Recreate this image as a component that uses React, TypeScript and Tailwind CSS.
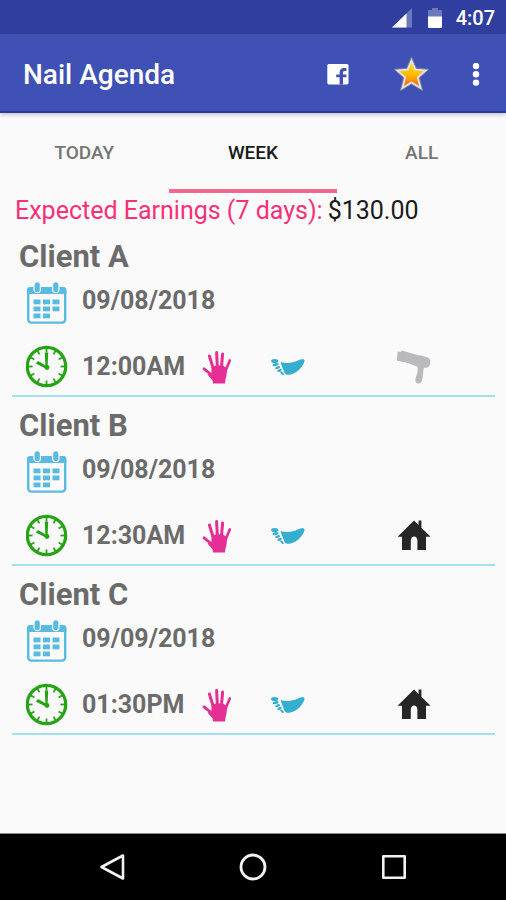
type Appointment = {
    client: string;
    date: string;
    time: string;
    place: 'salon' | 'home';
};

const appointments: Appointment[] = [
    { client: 'Client A', date: '09/08/2018', time: '12:00AM', place: 'salon' },
    { client: 'Client B', date: '09/08/2018', time: '12:30AM', place: 'home' },
    { client: 'Client C', date: '09/09/2018', time: '01:30PM', place: 'home' },
];

export default function App() {
    return (
        <div className="min-h-screen flex flex-col bg-[#fafafa] font-['Roboto',sans-serif]">
            <StatusBar />
            <header className="relative h-[79px] flex items-center bg-[#3f51b5] border-b-2 border-[#1f3da5] pl-[23px] pr-3 pt-1 text-white shadow-[0_2px_4px_rgba(0,0,0,0.2)]">
                <h1 className="flex-1 text-[28px] leading-8 font-medium">Nail Agenda</h1>
                <button type="button" aria-label="Facebook" className="w-9 h-12 mr-9 flex items-center justify-center">
                    <FacebookIcon />
                </button>
                <button type="button" aria-label="Rate" className="w-10 h-12 mr-[26px] flex items-center justify-center">
                    <StarIcon />
                </button>
                <button type="button" aria-label="More options" className="w-9 h-12 flex items-center justify-center">
                    <svg width="8" height="24" viewBox="0 0 8 24" fill="#fff">
                        <circle cx="4" cy="3" r="3.2" />
                        <circle cx="4" cy="11.3" r="3.2" />
                        <circle cx="4" cy="19.6" r="3.2" />
                    </svg>
                </button>
            </header>

            <div role="tablist" className="grid grid-cols-3 h-20">
                <Tab label="TODAY" />
                <Tab label="WEEK" selected />
                <Tab label="ALL" />
            </div>

            <main className="flex-1">
                <p className="pl-[15px] h-[35px] flex items-center gap-[5px] text-[25px] leading-8">
                    <span className="text-[#f5317a]">Expected Earnings (7 days):</span>
                    <span className="text-[#1a1a1a]">$130.00</span>
                </p>
                <ul className="ml-3 mr-[11px]">
                    {appointments.map((item) => (
                        <AppointmentRow key={item.client} item={item} />
                    ))}
                </ul>
            </main>

            <nav className="h-[67px] border-t border-[#8a8a8a] bg-black grid grid-cols-3 px-[42px]">
                <button type="button" aria-label="Back" className="flex items-center justify-center">
                    <svg width="28" height="28" viewBox="0 0 28 28" fill="none" stroke="#f2f2f2" strokeWidth="2.6" strokeLinejoin="round">
                        <path d="M25 2.5V25.5L3.5 14z" />
                    </svg>
                </button>
                <button type="button" aria-label="Home" className="flex items-center justify-center">
                    <svg width="28" height="28" viewBox="0 0 28 28" fill="none" stroke="#f2f2f2" strokeWidth="2.8">
                        <circle cx="14" cy="14" r="12" />
                    </svg>
                </button>
                <button type="button" aria-label="Recent apps" className="flex items-center justify-center">
                    <svg width="28" height="28" viewBox="0 0 28 28" fill="none" stroke="#f2f2f2" strokeWidth="2.6" strokeLinejoin="round">
                        <rect x="3.3" y="3.3" width="21.4" height="21.4" />
                    </svg>
                </button>
            </nav>
        </div>
    );
}

function StatusBar() {
    return (
        <div className="h-[34px] bg-[#303f9f] flex items-center justify-end pr-[11px] pt-[2px] text-white">
            <svg width="20" height="20" viewBox="0 0 20 20" className="mr-4">
                <path d="M20 0V19.5H0z" fill="#fff" fillOpacity="0.3" />
                <path d="M14.5 5.4V19.5H0z" fill="#fff" />
            </svg>
            <svg width="14" height="20" viewBox="0 0 14 20" className="mr-[14px]">
                <path d="M4 0h6v2h4v7H0V2h4z" fill="#fff" fillOpacity="0.3" />
                <path d="M0 8.5h14V19a1 1 0 0 1-1 1H1a1 1 0 0 1-1-1z" fill="#fff" />
            </svg>
            <span className="text-[20px] leading-6 font-medium">4:07</span>
        </div>
    );
}

function Tab({ label, selected = false }: { label: string; selected?: boolean }) {
    return (
        <button
            type="button"
            role="tab"
            aria-selected={selected}
            className={
                selected
                    ? 'border-y-4 border-t-transparent border-b-[#f2688f] text-[19px] leading-6 font-medium text-[#1a1a1a]'
                    : 'border-y-4 border-transparent text-[19px] leading-6 font-medium text-[#757575]'
            }
        >
            {label}
        </button>
    );
}

function AppointmentRow({ item }: { item: Appointment }) {
    return (
        <li className="border-b-2 border-[#a3e0f0] pt-[11px] pb-[6px] text-[#6b6b6b]">
            <h2 className="pl-[7px] text-[31px] leading-9 font-bold">{item.client}</h2>
            <div className="mt-[5px] h-11 pl-[14px] flex items-center">
                <CalendarIcon />
                <span className="pl-[14px] pb-[2px] text-[25px] leading-8 font-bold">{item.date}</span>
            </div>
            <div className="mt-[21px] h-11 pl-[14px] flex items-center">
                <ClockIcon />
                <span className="pl-[14px] w-[134px] text-[25px] leading-8 font-bold">{item.time}</span>
                <HandIcon />
                <FootIcon />
                <span className="ml-auto mr-16">
                    {item.place === 'home' ? <HouseIcon /> : <DryerIcon />}
                </span>
            </div>
        </li>
    );
}

function FacebookIcon() {
    return (
        <svg width="22" height="22" viewBox="0 0 22 22">
            <rect x="0.3" y="0" width="21.2" height="20.4" rx="1.6" fill="#fff" />
            <path d="M12.6 20.4v-7.2H9.2v-2.8h3.4V8.800c0-3 1.700-4.800 4.400-4.800h2.400v3h-1.700c-1.200 0-1.700.6-1.700 1.600v1.800h3.400v2.800H16v7.200z" fill="#3f51b5" />
        </svg>
    );
}

function StarIcon() {
    return (
        <svg width="38" height="38" viewBox="0 0 38 38">
            <defs>
                <linearGradient id="star" x1="0" y1="0" x2="0" y2="1">
                    <stop offset="0" stopColor="#fdd835" />
                    <stop offset="0.5" stopColor="#ffbd00" />
                    <stop offset="0.72" stopColor="#ff9600" />
                    <stop offset="1" stopColor="#ff6524" />
                </linearGradient>
            </defs>
            <path
                d="M18.5 1L23.3 12.3L36 13.3L26.4 21.7L29.7 34.8L18.5 28.1L7.3 34.8L10.6 21.7L1 13.3L13.7 12.3z"
                fill="#e4e0e0"
                stroke="#777b9b"
                strokeWidth="1"
                strokeLinejoin="round"
            />
            <path d="M18.5 6.500L21.700 14.500L30.500 15.300L23.800 21.100L26 29.900L18.500 25.300L11 29.900L13.200 21.100L6.500 15.300L15.300 14.500z" fill="url(#star)" />
        </svg>
    );
}

function CalendarIcon() {
    return (
        <svg width="42" height="44" viewBox="0 0 42 44" className="shrink-0">
            <rect x="2.2" y="8.2" width="37" height="34.4" rx="3" fill="#fafafa" stroke="#5abbe2" strokeWidth="2.4" />
            <path d="M1 14V10a3 3 0 0 1 3-3h33.400a3 3 0 0 1 3 3v4z" fill="#5abbe2" />
            <g fill="#5abbe2" stroke="#fafafa" strokeWidth="1.2">
                <rect x="8" y="1.600" width="6.400" height="11" rx="3.200" />
                <rect x="26.600" y="1.600" width="6.400" height="11" rx="3.200" />
            </g>
            <g fill="#5abbe2">
                <rect x="7.500" y="19.500" width="7" height="4.800" />
                <rect x="17" y="19.500" width="7" height="4.800" />
                <rect x="26.500" y="19.500" width="7" height="4.800" />
                <rect x="7.500" y="26.500" width="7" height="4.800" />
                <rect x="17" y="26.500" width="7" height="4.800" />
                <rect x="26.500" y="26.500" width="7" height="4.800" />
                <rect x="7.500" y="33.500" width="7" height="4.800" />
                <rect x="17" y="33.500" width="7" height="4.800" />
            </g>
        </svg>
    );
}

const ticks = [0, 30, 60, 90, 120, 150, 180, 210, 240, 270, 300, 330];

function ClockIcon() {
    return (
        <svg width="42" height="44" viewBox="0 0 42 44" className="shrink-0">
            <circle cx="20.5" cy="21.500" r="19.2" fill="#fafafa" stroke="#27a316" strokeWidth="3.2" />
            <g stroke="#27a316" strokeWidth="1.8">
                {ticks.map((deg) => (
                    <path key={deg} d="M20.5 3V7.500" transform={`rotate(${deg} 20.5 21.5)`} />
                ))}
            </g>
            <g fill="#27a316">
                <path d="M18.8 7.500h3.4l-.6 14h-2.2z" />
                <path d="M22.4 22L21 24.300L9.8 18.400L12 16z" />
                <circle cx="21" cy="22.500" r="2.4" />
            </g>
        </svg>
    );
}

function HandIcon() {
    return (
        <svg width="30" height="36" viewBox="0 0 30 36" className="shrink-0">
            <g stroke="#e62f94" strokeLinecap="round" fill="none">
                <path d="M11.400 20L7.400 7" strokeWidth="3" />
                <path d="M15.400 19L14.600 3.400" strokeWidth="3" />
                <path d="M19.400 19L20.600 5" strokeWidth="3" />
                <path d="M23.400 22L27.800 11.400" strokeWidth="2.600" />
                <path d="M11 27L2 19.800" strokeWidth="2.800" />
            </g>
            <path d="M9.600 18L14 16.400H21L25.200 19.500C24.600 22 25.200 26 23.600 30L23 34.400H11L10.600 31.500L5.500 25.500L9.400 24z" fill="#e62f94" />
        </svg>
    );
}

function FootIcon() {
    return (
        <svg width="34" height="20" viewBox="0 0 34 20" className="shrink-0 ml-[39px]" fill="#35aed0">
            <path d="M9.600 5C15 6.800 22.500 5.800 27 3.600C29.800 2.200 34.200 1.400 33.400 4.600C32 9.800 26 16.400 19.400 17.600C16.400 18.200 14.400 17.600 13.600 16C12.600 12.600 10.400 9 9.600 5z" />
            <ellipse cx="3.700" cy="4" rx="3.600" ry="2" />
            <ellipse cx="4.600" cy="7.600" rx="3.100" ry="1.400" transform="rotate(-12 4.600 7.600)" />
            <ellipse cx="6.600" cy="10.600" rx="2.600" ry="1.300" transform="rotate(-22 6.600 10.600)" />
            <ellipse cx="8.600" cy="13.400" rx="2.400" ry="1.200" transform="rotate(-28 8.600 13.400)" />
            <ellipse cx="11" cy="16.200" rx="2.400" ry="1" transform="rotate(45 11 16.200)" />
        </svg>
    );
}

function DryerIcon() {
    return (
        <svg width="34" height="36" viewBox="0 0 34 36" fill="#b9babd">
            <path d="M4.8 1.400L17.8 5.200C23 6.600 29 7 32 9.200C34.6 11.600 33.4 17.400 30.4 18.600C27.2 19.400 19.4 17.600 14.6 15.400C10.6 13.600 5 13 0 11.800C-.2 8.400.6 5.400 .6 2.400L3.600 3z" />
            <path d="M20.6 17L27 18C25.6 23 26.6 26 25.2 30.400C24.6 34 22.6 35 20.4 34.200C18.2 33.400 18 30.800 18.8 28.400C20.6 24.400 20.8 21.800 20.6 17z" />
        </svg>
    );
}

function HouseIcon() {
    return (
        <svg width="34" height="36" viewBox="0 0 34 36" fill="#262626">
            <path d="M17 2.500L21.600 7V2.600H24.400V9.800L33.600 18.800H29V32H20.400V22.500C20.400 17 13.800 17 13.800 22.500V32H5V18.800H.6z" />
        </svg>
    );
}
